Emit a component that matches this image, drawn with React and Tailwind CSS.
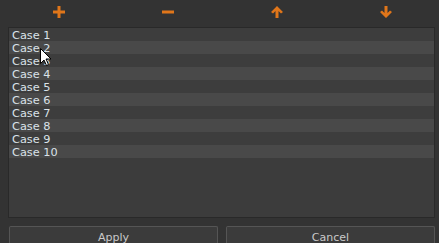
import React from 'react';

const cases = ['Case 1', 'Case 2', 'Case 3', 'Case 4', 'Case 5', 'Case 6', 'Case 7', 'Case 8', 'Case 9', 'Case 10'];

const ORANGE = '#e0761a';

const PlusIcon = () => (
  <svg width="12" height="12" viewBox="0 0 12 12">
    <rect x="4.5" y="0" width="3" height="12" fill={ORANGE} />
    <rect x="0" y="4.5" width="12" height="3" fill={ORANGE} />
  </svg>
);

const MinusIcon = () => (
  <svg width="12" height="12" viewBox="0 0 12 12">
    <rect x="0" y="4.5" width="12" height="3" fill={ORANGE} />
  </svg>
);

const UpIcon = () => (
  <svg width="12" height="12" viewBox="0 0 12 12">
    <path d="M6 0 L12 6 L10 7.5 L7.5 5 L7.5 12 L4.5 12 L4.5 5 L2 7.5 L0 6 Z" fill={ORANGE} />
  </svg>
);

const DownIcon = () => (
  <svg width="12" height="12" viewBox="0 0 12 12">
    <path d="M6 12 L12 6 L10 4.5 L7.5 7 L7.5 0 L4.5 0 L4.5 7 L2 4.5 L0 6 Z" fill={ORANGE} />
  </svg>
);

const Cursor = () => (
  <svg width="13" height="19" viewBox="0 0 13 19" className="absolute left-[40px] top-[48px]">
    <path d="M0.5 0.5 L0.5 15.5 L4 12 L6.5 17.5 L8.5 16.5 L6 11 L11 11 Z" fill="white" stroke="black" strokeWidth="1" />
  </svg>
);

export default function App() {
  return (
    <div
      className="relative w-[439px] h-[243px] overflow-hidden bg-[#333333] flex flex-col"
      style={{ fontFamily: '"DejaVu Sans", Verdana, sans-serif' }}
    >
      {/* toolbar */}
      <div className="shrink-0 grid grid-cols-4 ml-[5px] w-[435px] h-[27px] items-center justify-items-center pb-[4px]">
        <button><PlusIcon /></button>
        <button><MinusIcon /></button>
        <button><UpIcon /></button>
        <button><DownIcon /></button>
      </div>

      {/* list */}
      <div className="shrink-0 ml-[8px] w-[427px] h-[191px] bg-[#3c3c3c] border border-[#292929]">
        {cases.map((c, i) => (
          <div
            key={c}
            className={`h-[13px] pl-[3px] text-[11.3px] leading-[15px] text-[#dae2e8] ${i % 2 === 1 ? 'bg-[#494949]' : 'bg-[#3d3d3d]'}`}
          >
            {c}
          </div>
        ))}
      </div>

      {/* buttons */}
      <div className="shrink-0 flex gap-[8px] ml-[9px] mt-[8px]">
        <button className="w-[209px] h-[22px] bg-[#3b3b3b] border border-[#555555] border-b-0 rounded-t-[2px] text-[11px] text-[#c9c9c9] pt-[2px]">
          Apply
        </button>
        <button className="w-[209px] h-[22px] bg-[#3b3b3b] border border-[#555555] border-b-0 rounded-t-[2px] text-[11px] text-[#c9c9c9] pt-[2px]">
          Cancel
        </button>
      </div>

      <Cursor />
    </div>
  );
}
